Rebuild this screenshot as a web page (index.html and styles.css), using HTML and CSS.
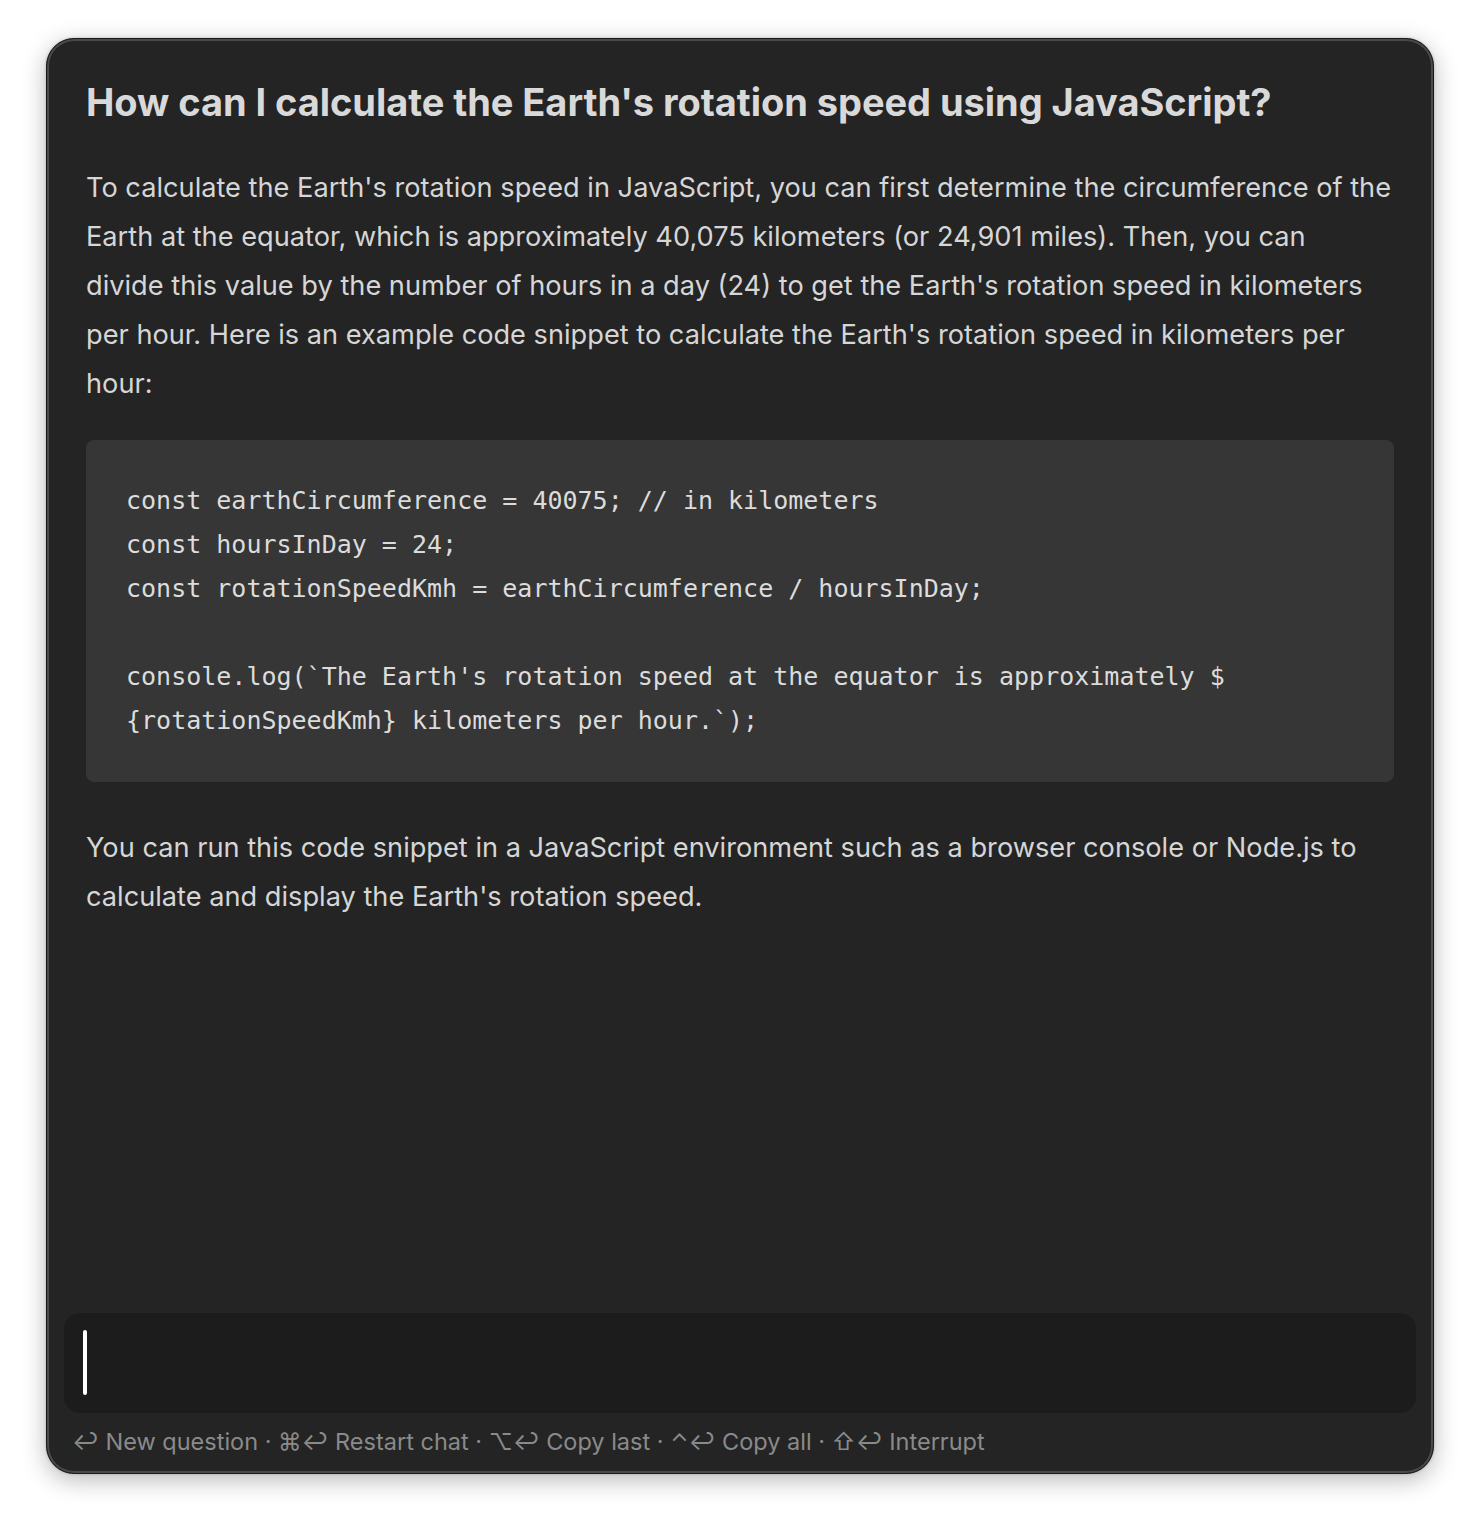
FILE: index.html
```html
<!DOCTYPE html>
<html lang="en">
<head>
<meta charset="utf-8">
<title>Chat</title>
<link rel="stylesheet" href="styles.css">
</head>
<body>
<div class="window">
  <div class="content">
    <h1 class="title">How can I calculate the Earth's rotation speed using JavaScript?</h1>
    <p class="para">To calculate the Earth's rotation speed in JavaScript, you can first determine the circumference of the Earth at the equator, which is approximately 40,075 kilometers (or 24,901 miles). Then, you can<br>divide this value by the number of hours in a day (24) to get the Earth's rotation speed in kilometers<br>per hour. Here is an example code snippet to calculate the Earth's rotation speed in kilometers per<br>hour:</p>
    <pre class="code">const earthCircumference = 40075; // in kilometers
const hoursInDay = 24;
const rotationSpeedKmh = earthCircumference / hoursInDay;

console.log(`The Earth's rotation speed at the equator is approximately $
{rotationSpeedKmh} kilometers per hour.`);</pre>
    <p class="para para-after">You can run this code snippet in a JavaScript environment such as a browser console or Node.js to calculate and display the Earth's rotation speed.</p>
  </div>
  <div class="input"><span class="caret"></span></div>
  <div class="footer">↩ New question · ⌘↩ Restart chat · ⌥↩ Copy last · ⌃↩ Copy all · ⇧↩ Interrupt</div>
</div>
</body>
</html>
```
FILE: styles.css
```css
html, body {
  margin: 0;
  padding: 0;
  background: #ffffff;
}
body {
  padding: 38px 46px 54px 46px;
  font-family: Inter, "Noto Sans", "Liberation Sans", sans-serif;
}
.window {
  box-sizing: border-box;
  width: 1388px;
  height: 1436px;
  background: #242424;
  border-radius: 28px;
  border: 1px solid #1a1a1a;
  box-shadow: inset 0 0 0 2px #4a4a4a, 0 6px 24px rgba(0,0,0,0.28), 0 0 3px rgba(0,0,0,0.2);
  display: flex;
  flex-direction: column;
  padding: 0 17px 0 17px;
}
.content {
  flex: 1;
  padding: 39px 22px 0 22px;
}
.title {
  margin: 0;
  font-size: 38px;
  line-height: 48px;
  font-weight: 700;
  color: #d9d9d9;
  letter-spacing: -0.05px;
}
.para {
  margin: 37px 0 0 0;
  font-size: 27.2px;
  line-height: 49px;
  color: #d6d6d6;
}
.code {
  margin: 32px 0 0 0;
  background: #363636;
  border-radius: 8px;
  padding: 39px 41px 39px 40px;
  font-family: "DejaVu Sans Mono", "Liberation Mono", monospace;
  font-size: 25px;
  line-height: 44px;
  color: #dcdcdc;
  white-space: pre;
}
.para-after {
  margin-top: 41px;
}
.input {
  height: 100px;
  background: #1c1c1c;
  border-radius: 16px;
  padding: 17px 0 0 19px;
  box-sizing: border-box;
}
.caret {
  display: block;
  width: 4px;
  height: 65px;
  background: #ffffff;
  border-radius: 2px;
}
.footer {
  height: 60px;
  display: flex;
  align-items: center;
  padding-left: 8px;
  padding-bottom: 4px;
  box-sizing: border-box;
  font-size: 23.5px;
  color: #8a8a8a;
}
```
